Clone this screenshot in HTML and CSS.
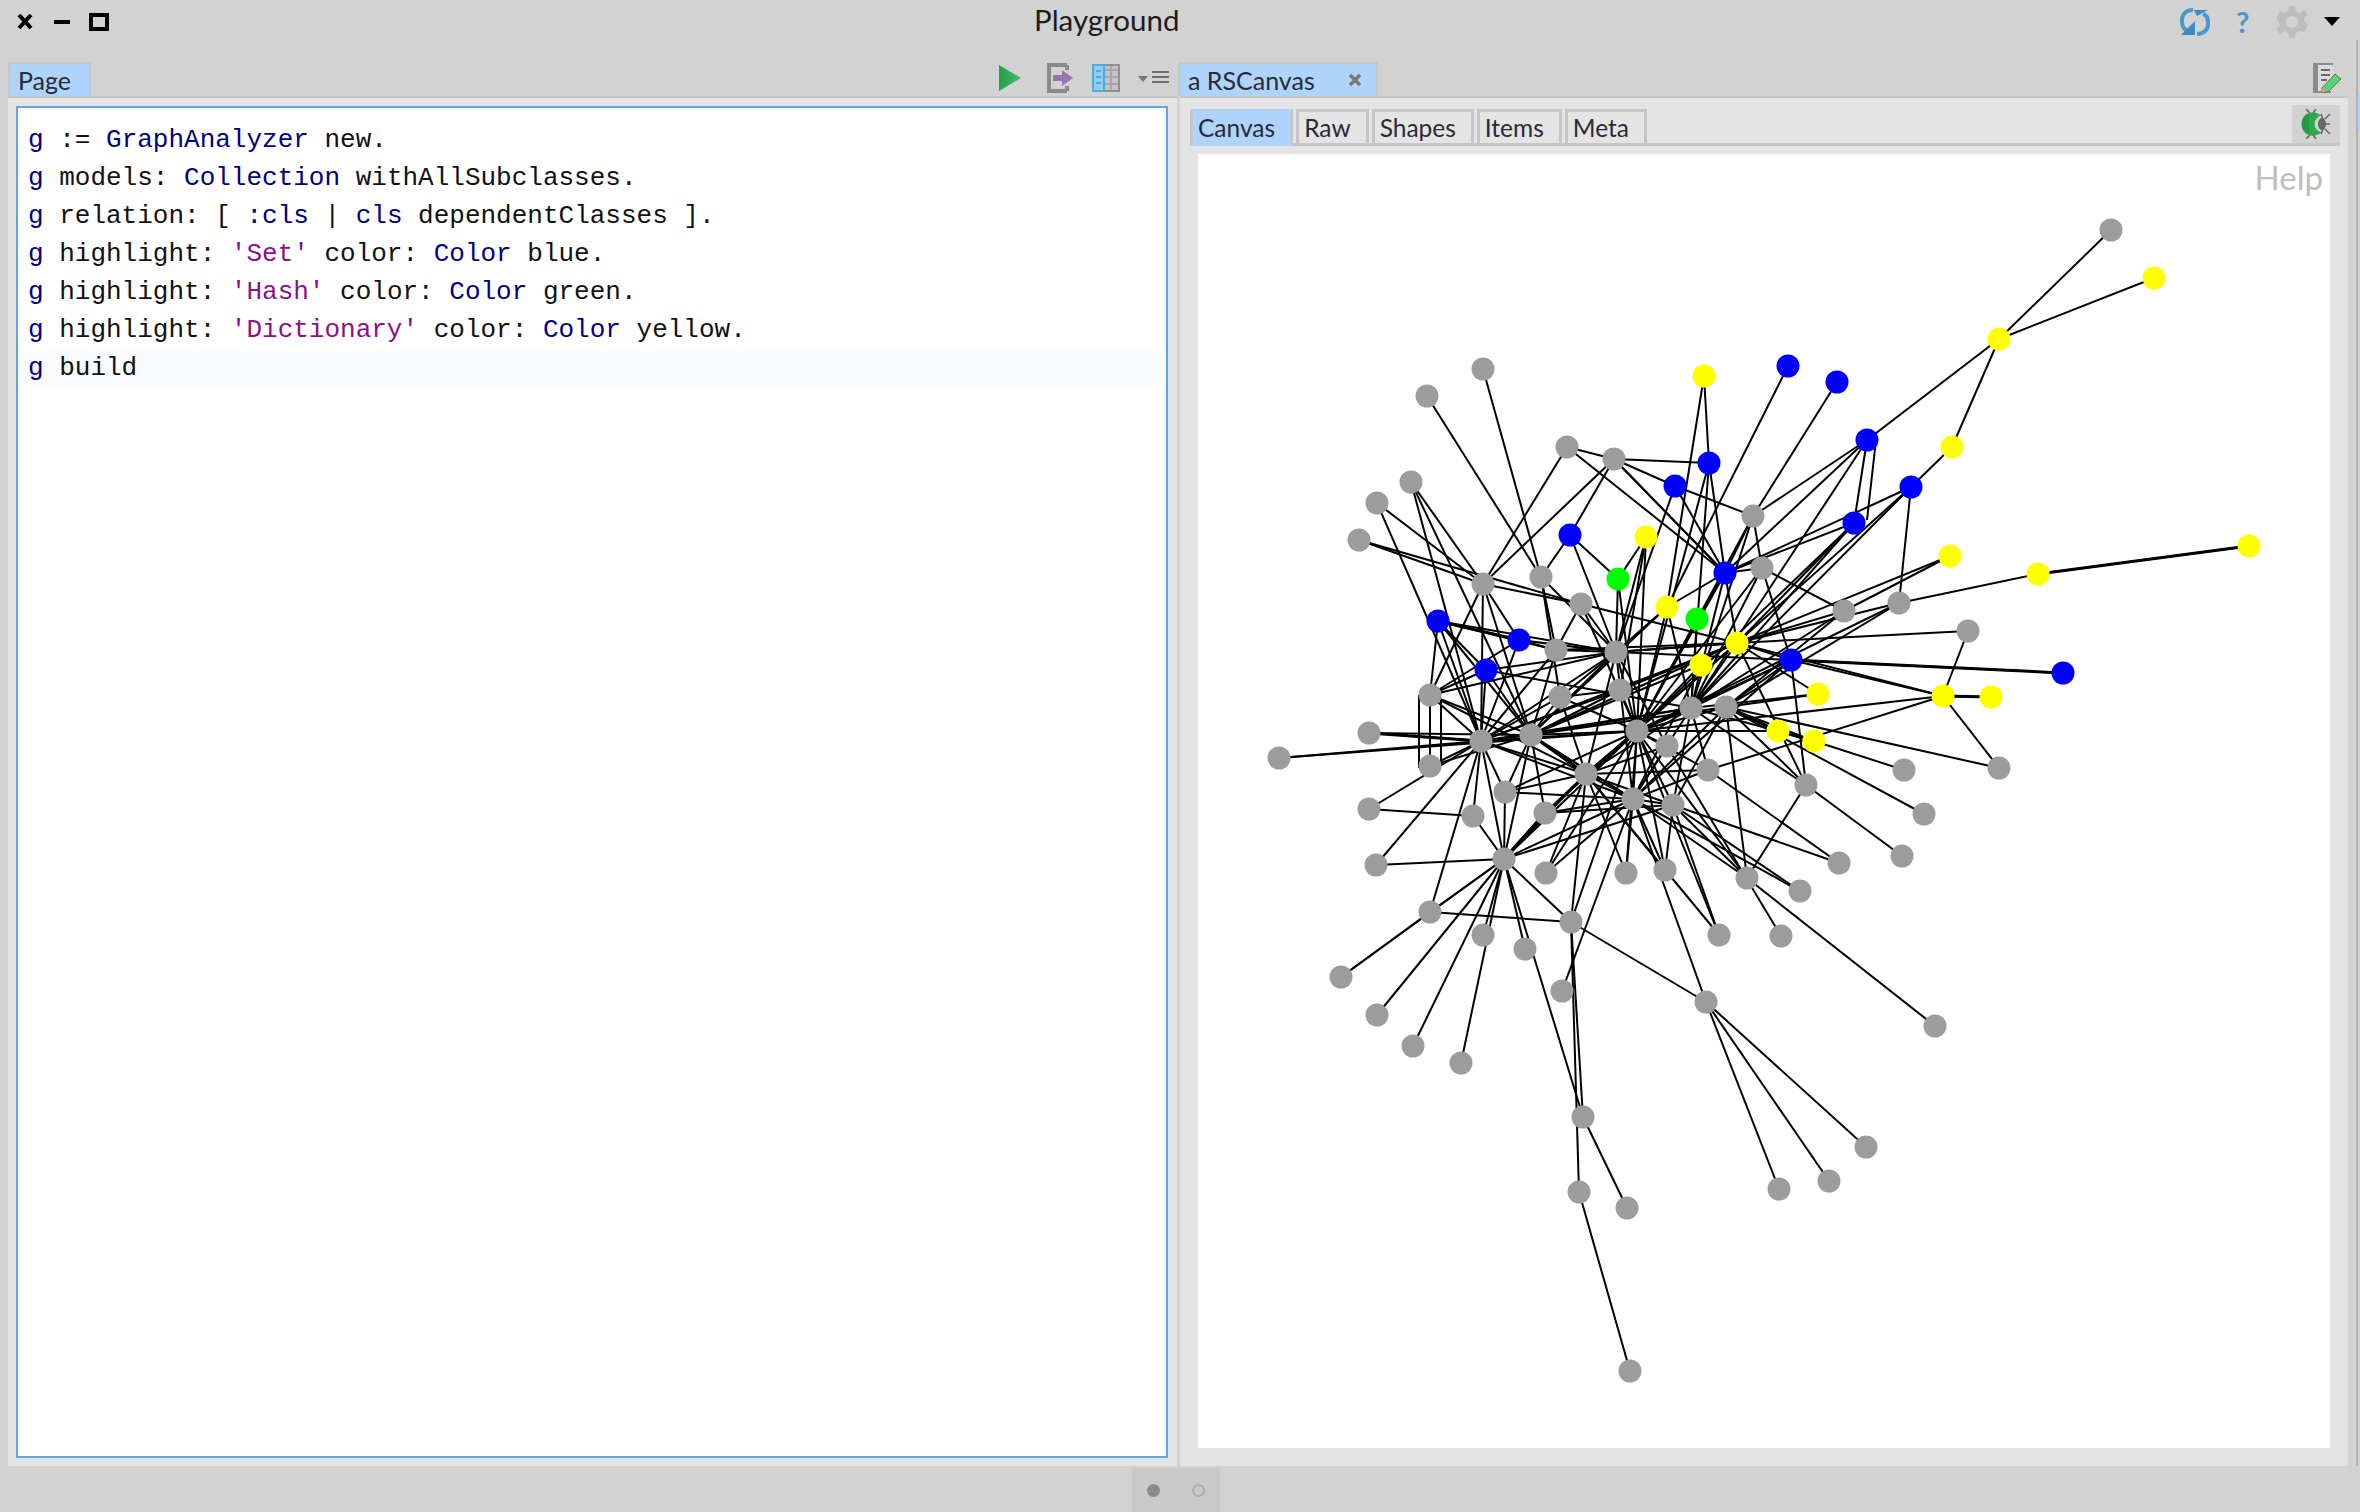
FILE: index.html
```html
<!DOCTYPE html>
<html lang="en">
<head>
  <title>Playground</title>
  <meta charset="UTF-8">
  <link rel="stylesheet" href="styles.css">
</head>
<body>
  <div class="window">
    <header class="titlebar">
      <div class="win-buttons">
        <svg width="16" height="15" viewBox="0 0 16 15"><path d="M2 1 L14 14 M14 1 L2 14" stroke="#000" stroke-width="4" fill="none"/></svg>
        <svg width="16" height="4" viewBox="0 0 16 4"><rect width="16" height="4" fill="#000"/></svg>
        <svg class="ic-max" width="20" height="18" viewBox="0 0 20 18"><rect x="2" y="2" width="16" height="14" stroke="#000" stroke-width="4" fill="none"/></svg>
      </div>
      <div class="title">Playground</div>
      <div class="win-tools">
        <svg class="ic-sync" width="30" height="30" viewBox="0 0 30 30">
          <path d="M13 3 C5 3 1 9 2 15 C2 19 4 22 7 24 M17 27 C25 27 29 21 28 15 C28 11 26 8 23 7" stroke="#4b97c9" stroke-width="4" fill="none"/>
          <path d="M1 28 L15 28 L15 14 Z M14 3 L28 3 L17 9 Z" fill="#3a8cc2"/>
        </svg>
        <span class="help-mark">?</span>
        <svg class="ic-gear" width="32" height="32" viewBox="0 0 32 32">
          <path d="M13 0 H19 L20 5 L24 7 L28 4 L32 9 L28 12 L29 16 L32 19 L28 26 L24 25 L20 27 L19 32 H13 L12 27 L8 25 L4 28 L0 23 L4 20 L3 16 L0 12 L4 5 L8 7 L12 5 Z" fill="#bdbdbd"/>
          <circle cx="16" cy="16" r="6" fill="#d2d2d2"/>
        </svg>
        <svg class="ic-down" width="16" height="9" viewBox="0 0 16 9"><path d="M0 0 H16 L8 9 Z" fill="#000"/></svg>
      </div>
    </header>

    <main class="panes">
      <section class="pane pane-left">
        <div class="tabbar">
          <div class="tab"><span>Page</span></div>
          <div class="tools">
            <svg class="ic-play" width="22" height="26" viewBox="0 0 22 26"><defs><linearGradient id="play" x1="0" x2="1" y1="0" y2="0"><stop offset="0" stop-color="#22a24a"/><stop offset="1" stop-color="#4cb768"/></linearGradient></defs><path d="M0 0 L22 13 L0 26 Z" fill="url(#play)"/></svg>
            <svg class="ic-open" width="27" height="30" viewBox="0 0 27 30"><path d="M20 2 H2 V28 H20 M20 2 V7 M20 23 V28" stroke="#8a8a8a" stroke-width="4" fill="none"/><path d="M6 12 H15 V7 L26 15 L15 23 V18 H6 Z" fill="#9b72b0"/></svg>
            <svg class="ic-cols" width="28" height="28" viewBox="0 0 28 28">
              <rect x="1" y="1" width="26" height="26" fill="#c4c4c4" stroke="#8f8f8f" stroke-width="2"/>
              <rect x="1" y="1" width="11" height="26" fill="#8fccf6" stroke="#55a7dc" stroke-width="2"/>
              <path d="M4 7 H9 M4 13 H9 M4 19 H9" stroke="#55a7dc" stroke-width="2"/>
              <path d="M19 2 V26 M13 6 H26 M13 13 H26 M13 20 H26" stroke="#a8a8a8" stroke-width="2"/>
            </svg>
            <svg class="ic-menu" width="32" height="16" viewBox="0 0 32 16"><path d="M0 6 H10 L5 12 Z" fill="#777"/><path d="M14 2 H31 M14 7 H31 M14 12 H31" stroke="#6e6e6e" stroke-width="2"/></svg>
          </div>
        </div>
        <div class="pane-body">
          <div class="editor">
            <div class="line"><span class="var">g</span> := <span class="cls">GraphAnalyzer</span> new.</div>
            <div class="line"><span class="var">g</span> models: <span class="cls">Collection</span> withAllSubclasses.</div>
            <div class="line"><span class="var">g</span> relation: [ <span class="cls">:cls</span> | <span class="cls">cls</span> dependentClasses ].</div>
            <div class="line"><span class="var">g</span> highlight: <span class="str">'Set'</span> color: <span class="cls">Color</span> blue.</div>
            <div class="line"><span class="var">g</span> highlight: <span class="str">'Hash'</span> color: <span class="cls">Color</span> green.</div>
            <div class="line"><span class="var">g</span> highlight: <span class="str">'Dictionary'</span> color: <span class="cls">Color</span> yellow.</div>
            <div class="line current"><span class="var">g</span> build</div>
          </div>
        </div>
      </section>

      <div class="splitter"></div>

      <section class="pane pane-right">
        <div class="tabbar">
          <div class="tab tab-closable">
            <span>a RSCanvas</span>
            <svg width="14" height="14" viewBox="0 0 14 14"><path d="M2 2 L12 12 M12 2 L2 12" stroke="#777" stroke-width="3.5"/></svg>
          </div>
          <div class="tools">
            <svg width="28" height="30" viewBox="0 0 28 30">
              <path d="M20 1 H1 V29 H18" fill="#dcdcdc" stroke="#8a8a8a" stroke-width="2"/>
              <rect x="1" y="1" width="4" height="28" fill="#8a8a8a"/>
              <path d="M8 7 H17 M8 12 H17 M8 17 H14" stroke="#666" stroke-width="2"/>
              <path d="M9 25 L22 11 L28 16 L15 29 L9 29 Z" fill="#5fd07a" stroke="#4a7a58"/>
              <path d="M9 25 L13 29 L9 29 Z" fill="#f0a84a"/>
            </svg>
          </div>
        </div>
        <div class="pane-body body-right">
          <div class="subtabs">
            <div class="subtab active">Canvas</div>
            <div class="subtab">Raw</div>
            <div class="subtab">Shapes</div>
            <div class="subtab">Items</div>
            <div class="subtab">Meta</div>
            <div class="bug-btn">
              <svg width="30" height="30" viewBox="0 0 30 30">
                <circle cx="12" cy="15" r="11.5" fill="#2dab4c"/>
                <path d="M1 15 A11.5 11.5 0 0 1 8 4 L8 26 A11.5 11.5 0 0 1 1 15 Z" fill="#249a42"/>
                <circle cx="22" cy="15" r="8.5" fill="#d2d2d2"/>
                <ellipse cx="21" cy="15" rx="4" ry="6" fill="#666"/>
                <path d="M5 0 L9 4 M15 0 L12 4 M5 30 L9 26 M15 30 L12 26 M20 5 L22 10 M29 5 L24 10 M29 15 H24 M29 25 L24 20 M20 25 L22 20" stroke="#666" stroke-width="1.5"/>
              </svg>
            </div>
          </div>
          <div class="canvas">
            <svg id="graph" width="1132" height="1294" viewBox="1198 154 1132 1294"></svg>
            <span class="canvas-help">Help</span>
          </div>
        </div>
      </section>

      <div class="edge-strip"><div class="edge-blue"></div></div>
    </main>

    <footer class="footer">
      <div class="pager">
        <span class="dot dot-on"></span>
        <span class="dot"></span>
      </div>
    </footer>
  </div>

  <script src="graph.js"></script>
</body>
</html>
```

FILE: styles.css
```css
:root {
  --bar: #d2d2d2;
  --panel: #e4e4e4;
  --line: #c6c6c6;
  --tab: #aed4fb;
  --focus: #62a5e4;
}

* {
  box-sizing: border-box;
}

body {
  margin: 0;
  font-family: 'Lato', 'Noto Sans', sans-serif;
  color: #222;
  background: var(--bar);
}

.window {
  width: 2360px;
  height: 1512px;
  display: flex;
  flex-direction: column;
  overflow: hidden;
}

.titlebar {
  height: 40px;
  flex: none;
  display: grid;
  grid-template-columns: 1034px auto 1fr;
  align-items: center;
  padding-top: 3px;
}

.win-buttons {
  display: flex;
  align-items: center;
  gap: 21px;
  padding-left: 17px;
}

.ic-max {
  margin-left: -2px;
}

.title {
  font-size: 29.5px;
  color: #1c1c1c;
  margin-top: -4px;
}

.win-tools {
  display: flex;
  justify-content: flex-end;
  align-items: center;
  padding-right: 20px;
}

.help-mark {
  font-size: 29px;
  font-weight: 700;
  line-height: 30px;
  color: #4b97c9;
  margin-left: 26px;
  width: 16px;
}

.ic-gear {
  margin-left: 24px;
}

.ic-down {
  margin-left: 16px;
}

.panes {
  height: 1426px;
  flex: none;
  display: flex;
  padding-left: 8px;
}

.pane {
  display: flex;
  flex-direction: column;
}

.pane-left {
  width: 1169px;
}

.pane-right {
  width: 1168px;
}

.splitter {
  width: 3px;
  background: var(--bar);
}

.edge-strip {
  margin-left: 8px;
  width: 4px;
  border-left: 2px solid #b4b4b4;
  padding-top: 52px;
}

.edge-blue {
  height: 40px;
  background: var(--tab);
}

.tabbar {
  height: 58px;
  flex: none;
  display: flex;
  justify-content: space-between;
  align-items: flex-end;
  padding-top: 22px;
  border-bottom: 2px solid var(--line);
}

.tab {
  height: 34px;
  padding: 0 18px 0 8px;
  border: 2px solid var(--line);
  border-bottom: none;
  background: var(--tab);
  font-size: 25px;
  line-height: 32px;
  color: #2a2a3a;
}

.tab-closable {
  width: 200px;
  display: flex;
  justify-content: space-between;
  align-items: center;
  padding: 0 14px 0 8px;
  margin-left: -2px;
}

.tools {
  display: flex;
  align-items: center;
  gap: 24px;
  height: 34px;
  padding-right: 7px;
  padding-bottom: 2px;
}

.ic-open {
  margin-left: 2px;
}

.ic-cols {
  margin-left: -6px;
}

.ic-menu {
  margin-left: -6px;
}

.pane-body {
  flex: 1;
  background: var(--panel);
  padding: 8px 9px 8px 8px;
  min-height: 0;
  display: flex;
}

.body-right {
  flex-direction: column;
  padding: 8px 8px 18px 10px;
}

.editor {
  flex: 1;
  background: #fff;
  border: 2px solid var(--focus);
  padding-top: 13px;
  font-family: 'Liberation Mono', monospace;
  font-size: 26px;
  color: #111;
}

.line {
  height: 38px;
  line-height: 38px;
  padding-left: 10px;
  white-space: pre;
}

.line.current {
  background: #f9fbfd;
}

.var,
.cls {
  color: #000080;
}

.str {
  color: #8b0f8b;
}

.subtabs {
  height: 40px;
  flex: none;
  display: flex;
  align-items: flex-end;
  gap: 3px;
  border-bottom: 3px solid var(--line);
}

.subtab {
  height: 37px;
  padding: 0 15px 0 5px;
  margin-bottom: -3px;
  border: 3px solid var(--line);
  font-size: 24.5px;
  line-height: 31px;
  color: #2a2a3a;
  flex: none;
}

.subtab.active {
  background: var(--tab);
  border-top-color: transparent;
  border-bottom-color: var(--tab);
}

.bug-btn {
  margin-left: auto;
  width: 48px;
  height: 38px;
  background: var(--bar);
  display: flex;
  align-items: center;
  justify-content: center;
}

.canvas {
  position: relative;
  height: 1294px;
  margin: 8px 10px 0 8px;
  background: #fff;
  overflow: hidden;
}

#graph {
  display: block;
}

.canvas-help {
  position: absolute;
  top: 3px;
  right: 7px;
  font-size: 33px;
  color: #bdbdbd;
}

.footer {
  flex: 1;
  display: flex;
}

.pager {
  width: 88px;
  height: 44px;
  margin-top: 2px;
  margin-left: 1132px;
  background: #c9c9c9;
  display: flex;
  align-items: center;
  justify-content: center;
  gap: 32px;
}

.dot {
  width: 13px;
  height: 13px;
  border-radius: 50%;
  border: 2px solid #adadad;
}

.dot.dot-on {
  background: #8a8a8a;
  border-color: #8a8a8a;
}
```

FILE: graph.js
```js
// node positions read off the canvas, id x y colour
const NODE_DATA = `
t1 2111 230 g; y1 2154 278 y; y2 1999 339 y; y3 1952 447 y; b1 1867 440 b; b2 1911 487 b; b3 1854 523 b;
y4 1950 556 y; y5 2038 574 y; y6 2249 546 y; y7 1704 376 y; b4 1788 366 b; b5 1837 382 b; g1 1483 369 g;
g0 1427 396 g; k1 1567 447 g; k2 1614 459 g; b6 1709 463 b; b7 1675 486 b; k3 1411 482 g; k4 1377 503 g;
k5 1359 540 g; k6 1753 516 g; b8 1570 535 b; y8 1646 537 y; k7 1762 568 g; b9 1725 573 b; k8 1541 577 g;
v1 1618 579 v; k9 1483 584 g; k10 1581 604 g; y9 1667 607 y; k11 1844 611 g; k12 1899 603 g; v2 1697 619 v;
b10 1438 621 b; b11 1519 640 b; k13 1556 650 g; k14 1616 652 g; y10 1737 643 y; b12 1791 660 b; y11 1701 665 y;
b13 1486 670 b; k15 1430 695 g; k16 1560 697 g; k17 1620 690 g; y12 1818 694 y; y13 1943 696 y; y14 1991 697 y;
k18 1968 631 g; b14 2063 673 b; k19 1691 708 g; k20 1726 707 g; y15 1778 731 y; y16 1814 741 y; H 1637 731 g;
k21 1531 735 g; k22 1481 741 g; k23 1369 733 g; k24 1279 758 g; k25 1430 766 g; k26 1667 746 g; k27 1708 770 g;
k28 1586 774 g; k29 1904 770 g; k30 1999 768 g; k31 1806 785 g; k32 1505 792 g; k33 1633 799 g; k34 1673 805 g;
k35 1545 813 g; k36 1473 816 g; k37 1369 809 g; k38 1924 814 g; k39 1902 856 g; k40 1839 863 g; k41 1504 859 g;
k42 1376 865 g; k43 1546 873 g; k44 1626 873 g; k45 1665 870 g; k46 1747 878 g; k47 1800 891 g; k48 1430 912 g;
k49 1571 922 g; k50 1483 935 g; k51 1525 949 g; k52 1719 935 g; k53 1781 936 g; k54 1341 977 g; k55 1377 1015 g;
k56 1562 991 g; k57 1706 1002 g; k58 1935 1026 g; k59 1413 1046 g; k60 1461 1063 g; k61 1583 1117 g;
k62 1866 1147 g; k63 1779 1189 g; k64 1829 1181 g; k65 1579 1192 g; k66 1627 1208 g; k67 1630 1371 g`;

const EDGE_DATA = `
t1 y2, y1 y2, y2 b1, y2 y3, y3 b2, b2 k12, b2 b9, b2 y10, b2 k19, b1 b3, b1 k6, b1 b9, b1 k19, b3 b9, b3 y10, b3 H,
b3 k19, y6 y5, y5 k12, k12 y10, k12 H, k12 k20, y4 k11, y4 y10, k11 y10, k11 k7, k11 k20, k11 k19, k18 y10, k18 y13,
b14 b12, b12 y13, b12 y10, b12 k19, b12 k20, b12 H, b12 k33, b12 k7, y13 y14, y13 y10, y13 k27, y13 k30, y12 k20,
y12 k19, y12 y10, y15 k20, y15 k19, y15 H, y16 k20, y16 y15, y16 k29, k20 k30, k20 k38, k20 k31, k19 k31, k31 k39,
k31 k46, k31 y10, k31 b12, k40 k27, k40 k34, k47 k34, k47 k33, k58 k46, k46 k33, k46 k20, k46 k34, k52 k34, k53 k26,
k57 k33, k57 k62, k57 k63, k57 k64, k57 k49, k49 k48, k49 k61, k49 k65, k49 k41, k49 k28, k49 H, k61 k41,
k61 k66, k65 k67, k41 k48, k41 k54, k41 k55, k41 k59, k41 k50, k41 k51, k41 k60, k41 k35, k41 k42, k41 k32, k41 k36,
k41 k22, k41 k21, k41 k28, k48 k54, k48 k22, k42 k22, k37 k22, k37 k36, k36 k22, k32 k22, k32 k21, k32 H,
k32 k28, k32 k33, k35 k28, k35 k33, k35 H, k35 k21, k43 k28, k43 H, k43 k33, k44 H, k44 k33, k45 H, k45 k33, k45 k34,
k23 k22, k23 k21, k24 k22, k24 H, k25 k22, k25 k21, k25 k15, k15 k22, k15 k21, k15 k28, k15 b13, k15 k14, k15 b11,
k3 k9, k3 k22, k3 k21, k4 k9, k4 k22, k5 k9, k5 k10, g0 k8, g1 k8, k9 k1, k9 k2, k9 k10, k9 k15, k9 k22, k9 k21,
k9 b11, k10 k14, k10 H, k10 k13, k10 y10, k1 k2, k1 b9, k2 b9, k2 b8, k2 b7, b7 k6, b7 k14, b8 k8, b8 v1, b8 k14,
y8 v1, y8 k14, y8 k17, y8 H, v1 k14, v1 H, k8 k14, k8 k13, k8 k16, b10 b11, b10 k13, b10 k14, b10 k15, b10 b13, b10 k22,
b10 k21, b11 k13, b11 k14, b11 k22, b13 k19, b13 k22, b13 k21, b13 k14, k13 k14, k13 y10, k13 k22, k13 k21, k14 y10,
k14 b12, k14 H, k14 k21, k14 k22, k14 k16, k14 k28, k14 k26, k14 k33, k16 k21, k16 k22, k16 k17, k16 H,
k16 k28, k17 H, k17 k21, k17 k22, k17 y10, y9 H, y9 k19, y9 b4, y9 y7, y9 b9, y9 k14, y9 k21, v2 H, v2 k19, v2 b9,
y11 H, y11 k21, y11 k33, y10 H, y10 k19, y10 k21, y10 k22, y10 k14, y10 b9, y10 k28, b9 H, b9 k19, b9 k6, b9 k7,
b9 b6, b9 b7, b9 k2, k6 k19, k6 H, k6 b5, k6 k7, k7 H, k7 k19, b6 y7, b6 H, b6 k19, b6 k2,
H k19, H k20, H k21, H k22, H k26, H k27, H k28, H k33, H k34, H k52, H k46, H k41, H y13, k19 k21, k19 k22, k19 k28,
k19 k33, k19 k27, k19 k34, k20 k33, k20 k34, k20 k21, k21 k22, k21 k28, k21 k33, k22 k28, k22 k33, k26 k33, k26 k28,
k27 k33, k27 k28, k28 k33, k28 k34, k28 k44, k28 k45, k28 k52, k33 k34, k33 k56, k33 k21, k33 k41, k34 k35, k34 k41`;

const THICK_DATA = "b14 b12, y13 y14, y6 y5, k41 k35, H k28, k19 H, k20 y15, k23 k22, b10 b11, y15 y16, k28 k21";

// a few doubled lines run beside their edge instead of on it
const LOOSE_LINES = [[1419, 695, 1419, 768], [1441, 700, 1441, 764], [1876, 440, 1867, 520]];

const COLORS = { g: "#9c9c9c", y: "#ffff00", b: "#0000ff", v: "#00ff00" };
const SVG_NS = "http://www.w3.org/2000/svg";

const nodes = {};
NODE_DATA.split(";").forEach(item => {
  const [id, x, y, c] = item.trim().split(/\s+/);
  nodes[id] = { x: +x, y: +y, c };
});

const svg = document.getElementById("graph");

function addLine(x1, y1, x2, y2, width) {
  const line = document.createElementNS(SVG_NS, "line");
  line.setAttribute("x1", x1);
  line.setAttribute("y1", y1);
  line.setAttribute("x2", x2);
  line.setAttribute("y2", y2);
  line.setAttribute("stroke", "#000");
  line.setAttribute("stroke-width", width);
  svg.appendChild(line);
}

function addEdges(data, width) {
  data.split(",").forEach(pair => {
    const [a, b] = pair.trim().split(/\s+/);
    addLine(nodes[a].x, nodes[a].y, nodes[b].x, nodes[b].y, width);
  });
}

addEdges(EDGE_DATA, 2);
addEdges(THICK_DATA, 3);
LOOSE_LINES.forEach(l => addLine(l[0], l[1], l[2], l[3], 2));

Object.values(nodes).forEach(n => {
  const circle = document.createElementNS(SVG_NS, "circle");
  circle.setAttribute("cx", n.x);
  circle.setAttribute("cy", n.y);
  circle.setAttribute("r", 11.5);
  circle.setAttribute("fill", COLORS[n.c]);
  svg.appendChild(circle);
});
```
